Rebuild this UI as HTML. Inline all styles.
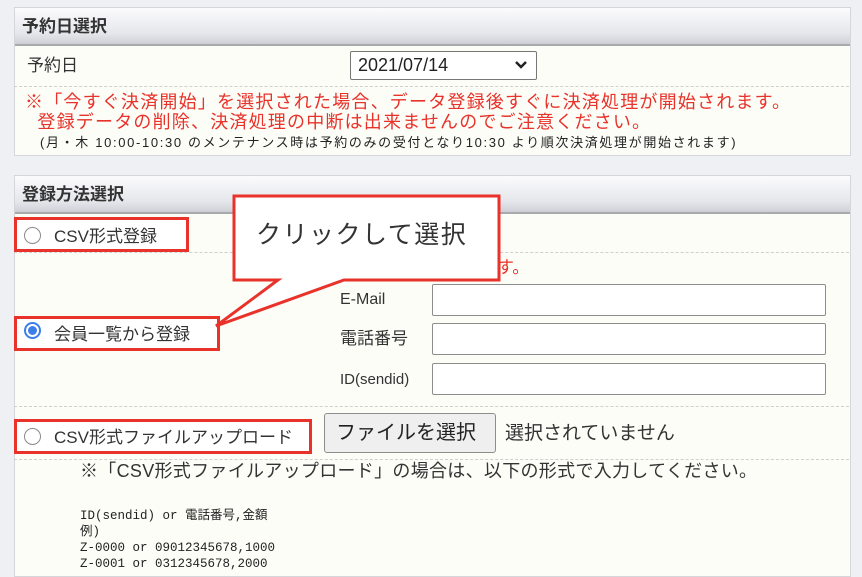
<!DOCTYPE html>
<html><head><meta charset="utf-8"><style>
body{margin:0;width:862px;height:568px;background:#eef0f4;position:relative;overflow:hidden;font-family:"Liberation Sans","Noto Sans CJK JP",sans-serif;}
.a{position:absolute;white-space:nowrap;line-height:1}
.panel{position:absolute;left:14px;width:835px;background:#fdfdf8;border:1px solid #d4d6da;}
.hd{position:absolute;left:0;right:0;top:0;height:36px;background:linear-gradient(#fbfbfd,#e6e7ec 70%,#cfd0d6);border-bottom:2px solid #a8a9ae;border-radius:3px 3px 0 0;}
.hd span{position:absolute;left:7px;top:10px;font-size:17px;line-height:1;font-weight:bold;color:#333;}
.inp{position:absolute;left:432px;width:392px;height:30px;border:1px solid #8d8d8d;border-radius:2px;background:#fff;}
.rb{position:absolute;border:3px solid #e8322a;background:#fff;}
.radio{position:absolute;width:15px;height:15px;border:1px solid #8a8a8a;border-radius:50%;background:#fff;}
.red{color:#e8322a}
.mono{font-family:"Liberation Mono","Noto Sans CJK JP",monospace;font-size:12.5px;color:#222;}
</style></head><body>
<div class="panel" style="top:7px;height:147px;">
<div class="hd"><span>予約日選択</span></div>
</div>
<div class="a" style="left:27px;top:57px;font-size:17px;color:#333">予約日</div>
<div class="a" style="left:350px;top:51px;width:185px;height:27px;border:1px solid #777;border-radius:2px;background:#fff;"></div>
<div class="a" style="left:358px;top:56px;font-size:18px;color:#222">2021/07/14</div>
<svg class="a" style="left:514px;top:60px" width="14" height="10"><path d="M2 2 L7 7 L12 2" stroke="#222" stroke-width="2.5" fill="none"/></svg>
<div class="a" style="left:14px;top:86px;width:835px;border-top:1px dashed #cfcfcf"></div>
<div class="a red" style="left:25px;top:92px;font-size:18px;line-height:20px;letter-spacing:1.2px">※「今すぐ決済開始」を選択された場合、データ登録後すぐに決済処理が開始されます。<br>&nbsp;&nbsp;登録データの削除、決済処理の中断は出来ませんのでご注意ください。</div>
<div class="a" style="left:40px;top:136px;font-size:13px;color:#222;letter-spacing:1.65px">(月・木 10:00-10:30 のメンテナンス時は予約のみの受付となり10:30 より順次決済処理が開始されます)</div>

<div class="panel" style="top:175px;height:400px;">
<div class="hd"><span>登録方法選択</span></div>
</div>
<div class="a" style="left:14px;top:252px;width:835px;border-top:1px dashed #cfcfcf"></div>
<div class="a" style="left:14px;top:406px;width:835px;border-top:1px dashed #cfcfcf"></div>
<div class="a" style="left:14px;top:459px;width:835px;border-top:1px dashed #cfcfcf"></div>

<div class="rb" style="left:14px;top:217px;width:169px;height:29px"></div>
<div class="radio" style="left:24px;top:227px"></div>
<div class="a" style="left:54px;top:228px;font-size:17px;color:#333">CSV形式登録</div>

<div class="a red" style="left:497px;top:259px;font-size:17px">す。</div>
<div class="a" style="left:340px;top:292px;font-size:16px;color:#333">E-Mail</div>
<div class="a" style="left:340px;top:330px;font-size:17px;color:#333">電話番号</div>
<div class="a" style="left:340px;top:372px;font-size:15px;color:#333">ID(sendid)</div>
<div class="inp" style="top:284px"></div>
<div class="inp" style="top:323px"></div>
<div class="inp" style="top:363px"></div>

<div class="rb" style="left:14px;top:316px;width:200px;height:29px"></div>
<div class="a" style="left:24px;top:322px;width:13px;height:13px;border:2px solid #3d7fe8;border-radius:50%;background:#fff"></div>
<div class="a" style="left:28px;top:326px;width:9px;height:9px;border-radius:50%;background:#3d7fe8"></div>
<div class="a" style="left:54px;top:326px;font-size:17px;color:#333">会員一覧から登録</div>

<svg class="a" style="left:0;top:0" width="862" height="568">
<polygon points="234,196 499,196 499,280 344,280 216,326 278,280 234,280" fill="#fff" stroke="#e8322a" stroke-width="3" stroke-linejoin="miter"/>
</svg>
<div class="a" style="left:256px;top:223px;font-size:25px;color:#333;letter-spacing:1.5px">クリックして選択</div>

<div class="rb" style="left:14px;top:419px;width:292px;height:29px"></div>
<div class="radio" style="left:24px;top:428px"></div>
<div class="a" style="left:54px;top:429px;font-size:17px;color:#333">CSV形式ファイルアップロード</div>
<div class="a" style="left:324px;top:413px;width:170px;height:38px;border:1px solid #8d8d8d;border-radius:3px;background:#efefef"></div>
<div class="a" style="left:336px;top:423px;font-size:20px;color:#222">ファイルを選択</div>
<div class="a" style="left:505px;top:424px;font-size:19px;color:#333">選択されていません</div>

<div class="a" style="left:80px;top:462px;font-size:18px;color:#333;letter-spacing:0.3px">※「CSV形式ファイルアップロード」の場合は、以下の形式で入力してください。</div>
<div class="a mono" style="left:80px;top:508px;line-height:16px">ID(sendid) or 電話番号,金額<br>例)<br>Z-0000 or 09012345678,1000<br>Z-0001 or 0312345678,2000</div>
</body></html>
